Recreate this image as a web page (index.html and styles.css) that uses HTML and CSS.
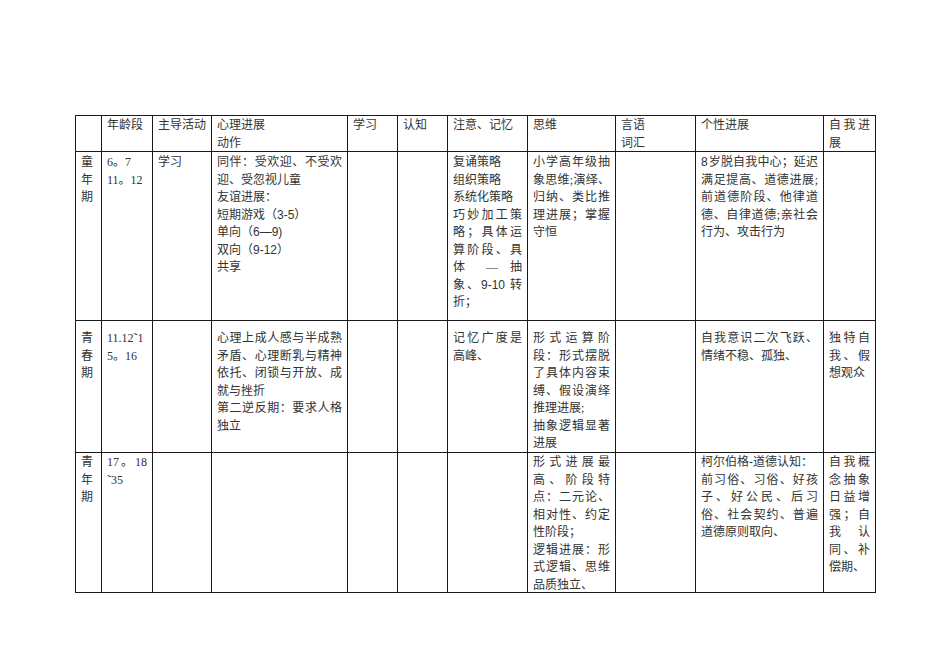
FILE: index.html
```html
<!DOCTYPE html>
<html lang="zh-CN">
<head>
<meta charset="utf-8">
<title>心理发展阶段</title>
<link rel="stylesheet" href="styles.css">
</head>
<body>
<div class="tbl">
  <div class="row rh">
    <div class="c"></div>
    <div class="c"><div class="l">年龄段</div></div>
    <div class="c"><div class="l">主导活动</div></div>
    <div class="c"><div class="l">心理进展</div><div class="l">动作</div></div>
    <div class="c"><div class="l">学习</div></div>
    <div class="c"><div class="l">认知</div></div>
    <div class="c"><div class="l">注意、记忆</div></div>
    <div class="c"><div class="l">思维</div></div>
    <div class="c"><div class="l">言语</div><div class="l">词汇</div></div>
    <div class="c"><div class="l">个性进展</div></div>
    <div class="c"><div class="l j">自我进</div><div class="l">展</div></div>
  </div>
  <div class="row r1">
    <div class="c"><div class="l">童</div><div class="l">年</div><div class="l">期</div></div>
    <div class="c"><div class="l">6。7</div><div class="l">11。12</div></div>
    <div class="c"><div class="l">学习</div></div>
    <div class="c">
      <div class="l j">同伴：受欢迎、不受欢</div>
      <div class="l">迎、受忽视儿童</div>
      <div class="l">友谊进展：</div>
      <div class="l">短期游戏（<span class="sa">3-5</span>）</div>
      <div class="l">单向（<span class="sa">6—9)</span></div>
      <div class="l">双向（<span class="sa">9-12</span>）</div>
      <div class="l">共享</div>
    </div>
    <div class="c"></div>
    <div class="c"></div>
    <div class="c">
      <div class="l">复诵策略</div>
      <div class="l">组织策略</div>
      <div class="l">系统化策略</div>
      <div class="l j">巧妙加工策</div>
      <div class="l j">略；具体运</div>
      <div class="l j">算阶段、具</div>
      <div class="l j">体 — 抽</div>
      <div class="l j">象、<span class="sa">9-10</span> 转</div>
      <div class="l">折；</div>
    </div>
    <div class="c">
      <div class="l j">小学高年级抽</div>
      <div class="l j">象思维;演绎、</div>
      <div class="l j">归纳、类比推</div>
      <div class="l j">理进展；掌握</div>
      <div class="l">守恒</div>
    </div>
    <div class="c"></div>
    <div class="c">
      <div class="l j"><span class="sa n8">8</span>岁脱自我中心；延迟</div>
      <div class="l j">满足提高、道德进展;</div>
      <div class="l j">前道德阶段、他律道</div>
      <div class="l j">德、自律道德;亲社会</div>
      <div class="l">行为、攻击行为</div>
    </div>
    <div class="c"></div>
  </div>
  <div class="row r2">
    <div class="c"><div class="l">青</div><div class="l">春</div><div class="l">期</div></div>
    <div class="c"><div class="l">11.12˜1</div><div class="l">5。16</div></div>
    <div class="c"></div>
    <div class="c">
      <div class="l j">心理上成人感与半成熟</div>
      <div class="l j">矛盾、心理断乳与精神</div>
      <div class="l j">依托、闭锁与开放、成</div>
      <div class="l">就与挫折</div>
      <div class="l j">第二逆反期：要求人格</div>
      <div class="l">独立</div>
    </div>
    <div class="c"></div>
    <div class="c"></div>
    <div class="c">
      <div class="l j">记忆广度是</div>
      <div class="l">高峰、</div>
    </div>
    <div class="c">
      <div class="l j">形式运算阶</div>
      <div class="l j">段：形式摆脱</div>
      <div class="l j">了具体内容束</div>
      <div class="l j">缚、假设演绎</div>
      <div class="l">推理进展;</div>
      <div class="l j">抽象逻辑显著</div>
      <div class="l">进展</div>
    </div>
    <div class="c"></div>
    <div class="c">
      <div class="l j">自我意识二次飞跃、</div>
      <div class="l">情绪不稳、孤独、</div>
    </div>
    <div class="c">
      <div class="l j">独特自</div>
      <div class="l j">我、假</div>
      <div class="l">想观众</div>
    </div>
  </div>
  <div class="row r3">
    <div class="c"><div class="l">青</div><div class="l">年</div><div class="l">期</div></div>
    <div class="c"><div class="l j">17。18</div><div class="l">˜35</div></div>
    <div class="c"></div>
    <div class="c"></div>
    <div class="c"></div>
    <div class="c"></div>
    <div class="c"></div>
    <div class="c">
      <div class="l j">形式进展最</div>
      <div class="l j">高、阶段特</div>
      <div class="l j">点：二元论、</div>
      <div class="l j">相对性、约定</div>
      <div class="l">性阶段；</div>
      <div class="l j">逻辑进展：形</div>
      <div class="l j">式逻辑、思维</div>
      <div class="l">品质独立、</div>
    </div>
    <div class="c"></div>
    <div class="c">
      <div class="l">柯尔伯格<span class="sa">-</span>道德认知：</div>
      <div class="l j">前习俗、习俗、好孩</div>
      <div class="l j">子、好公民、后习</div>
      <div class="l j">俗、社会契约、普遍</div>
      <div class="l">道德原则取向、</div>
    </div>
    <div class="c">
      <div class="l j">自我概</div>
      <div class="l j">念抽象</div>
      <div class="l j">日益增</div>
      <div class="l j">强；自</div>
      <div class="l j">我 认</div>
      <div class="l j">同、补</div>
      <div class="l">偿期、</div>
    </div>
  </div>
</div>
</body>
</html>
```
FILE: styles.css
```css
html, body {
  margin: 0;
  padding: 0;
  background: #ffffff;
}
body {
  font-family: "Liberation Serif", "Noto Sans CJK SC", serif;
  font-size: 12px;
  line-height: 17.5px;
  color: #333333;
}
.tbl {
  display: grid;
  grid-template-columns: 26px 51px 59px 136px 50px 50px 80px 88px 80px 128px 52px;
  grid-template-rows: 36px 169px 132px 140px;
  width: max-content;
  margin: 115px 0 0 75px;
  border-left: 1px solid #1a1a1a;
  border-top: 1px solid #1a1a1a;
}
.row {
  display: contents;
}
.c {
  box-sizing: border-box;
  min-width: 0;
  padding: 0 5px;
  border-right: 1px solid #1a1a1a;
  border-bottom: 1px solid #1a1a1a;
}
.rh .c { padding-top: 1px; }
.r1 .c { padding-top: 2px; }
.r2 .c { padding-top: 9px; }
.r3 .c { padding-top: 1px; }
.l {
  display: block;
  text-align: left;
}
.j {
  text-align: justify;
  text-align-last: justify;
}
.sa {
  font-family: "Liberation Sans", "Noto Sans CJK SC", sans-serif;
}
.n8 {
  margin-right: 1px;
}
```
